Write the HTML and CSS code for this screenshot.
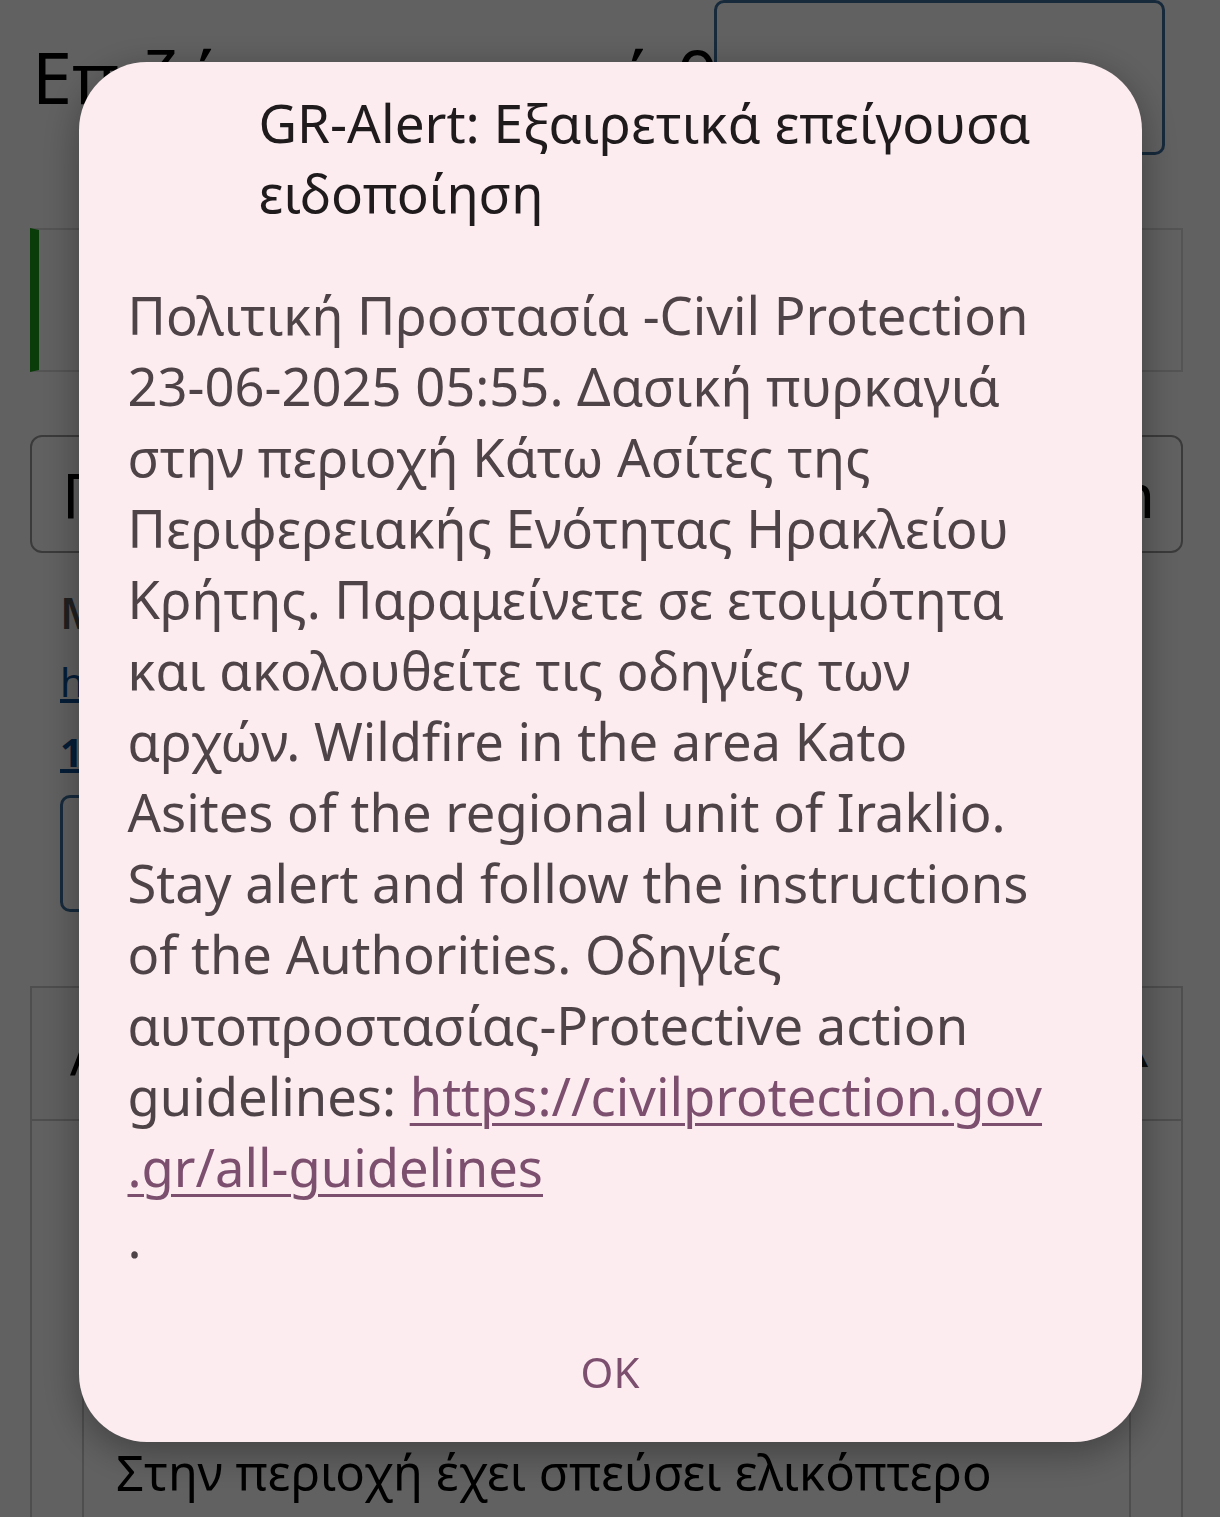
FILE: index.html
```html
<!DOCTYPE html>
<html lang="el">
<head>
    <meta charset="UTF-8">
    <meta name="viewport" content="width=device-width, initial-scale=1.0">
    <title>GR-Alert</title>
    <link rel="stylesheet" href="styles.css">
</head>
<body>
    <main class="page">
        <header class="page-head">
            <h1 class="page-title">Επιζώσα πυρκαγιά θέση</h1>
            <button class="btn-outline head-btn">Ανανέωση ειδήσεων</button>
        </header>

        <div class="notice">
            <p class="notice-text">Ενεργή πυρκαγιά</p>
        </div>

        <div class="search">
            <span class="search-left">Περιοχή</span>
            <span class="search-right">Heraklion</span>
        </div>

        <div class="info">
            <p class="info-label">Μεταβείτε στις οδηγίες</p>
            <a class="info-link" href="#">https://civilprotection.gov.gr</a>
            <a class="info-link info-strong" href="#">112</a>
            <button class="btn-outline info-btn">Κοινοποίηση</button>
        </div>

        <section class="accordion">
            <div class="acc-head">
                <span class="acc-title">Αναλυτικά</span>
                <span class="acc-caret">▲</span>
            </div>
            <div class="acc-body">
                <p class="acc-text">Στην περιοχή έχει σπεύσει ελικόπτερο</p>
            </div>
        </section>
    </main>

    <div class="scrim">
        <div class="alert" role="alertdialog">
            <h2 class="alert-title">GR-Alert: Εξαιρετικά επείγουσα<br>ειδοποίηση</h2>
            <p class="alert-text">Πολιτική Προστασία -Civil Protection<br>23-06-2025 05:55. Δασική πυρκαγιά<br>στην περιοχή Κάτω Ασίτες της<br>Περιφερειακής Ενότητας Ηρακλείου<br>Κρήτης. Παραμείνετε σε ετοιμότητα<br>και ακολουθείτε τις οδηγίες των<br>αρχών. Wildfire in the area Kato<br>Asites of the regional unit of Iraklio.<br>Stay alert and follow the instructions<br>of the Authorities. Οδηγίες<br>αυτοπροστασίας-Protective action<br>guidelines: <a class="alert-link" href="https://civilprotection.gov.gr/all-guidelines">https://civilprotection.gov<br>.gr/all-guidelines</a><br>.</p>
            <div class="alert-actions">
                <button class="alert-ok">OK</button>
            </div>
        </div>
    </div>
</body>
</html>
```

FILE: styles.css
```css
* {
    margin: 0;
    padding: 0;
    box-sizing: border-box;
}

body {
    font-family: 'Noto Sans', 'Liberation Sans', sans-serif;
    background: #fff;
    color: #000;
    height: 1517px;
    overflow: hidden;
}

.page {
    padding: 0 37px 0 30px;
}

/* page behind the alert */
.page-head {
    display: flex;
    justify-content: space-between;
    align-items: flex-start;
    height: 155px;
    margin-right: 18px;
}

.page-title {
    font-size: 72px;
    font-weight: 400;
    line-height: 1;
    margin-top: 40px;
    padding-left: 2px;
    white-space: nowrap;
    overflow: hidden;
    min-width: 0;
}

.btn-outline {
    font-family: inherit;
    background: #fff;
    border: 3px solid #3b6f9e;
    border-radius: 10px;
    color: #3b6f9e;
}

.head-btn {
    flex-shrink: 0;
    width: 451px;
    height: 155px;
    font-size: 40px;
    white-space: nowrap;
    padding-top: 38px;
}

.notice {
    margin-top: 73px;
    height: 144px;
    border: 2px solid #ddd;
    border-left: 9px solid #1a9e1a;
    display: flex;
    align-items: center;
    padding-left: 80px;
}

.notice-text {
    font-size: 44px;
}

.search {
    margin-top: 63px;
    height: 118px;
    border: 2px solid #9a9a9a;
    border-radius: 12px;
    display: flex;
    justify-content: space-between;
    align-items: center;
    padding: 0 26px 0 30px;
    font-size: 62px;
}

.info {
    padding: 24px 0 0 30px;
}

.info-label {
    font-size: 44px;
    font-weight: 600;
    color: #555;
    line-height: 70px;
}

.info-link {
    display: block;
    font-size: 40px;
    line-height: 70px;
    color: #0d4f92;
}

.info-strong {
    font-weight: 700;
}

.info-btn {
    margin-top: 8px;
    width: 420px;
    height: 117px;
    font-size: 44px;
}

.accordion {
    margin-top: 74px;
    border: 2px solid #ccc;
    height: 600px;
}

.acc-head {
    height: 133px;
    display: flex;
    justify-content: space-between;
    align-items: center;
    padding: 0 26px 0 38px;
    border-bottom: 2px solid #ccc;
    background: #fafafa;
}

.acc-title {
    font-size: 56px;
}

.acc-caret {
    font-size: 34px;
    color: #222;
}

.acc-body {
    margin: 0 50px;
    border-left: 2px solid #ccc;
    border-right: 2px solid #ccc;
    height: 470px;
    padding: 318px 0 0 32px;
}

.acc-text {
    font-size: 49px;
    white-space: nowrap;
}

/* emergency alert dialog */
.scrim {
    position: fixed;
    inset: 0;
    background: rgba(0, 0, 0, 0.62);
    display: flex;
    justify-content: center;
    align-items: flex-start;
    padding-top: 62px;
}

.alert {
    width: 1063px;
    height: 1380px;
    background: #fcecf0;
    border-radius: 68px;
    box-shadow: 0 10px 40px rgba(0, 0, 0, 0.35);
    padding: 26px 40px 0 49px;
    display: flex;
    flex-direction: column;
}

.alert-title {
    font-size: 53px;
    font-weight: 400;
    line-height: 70px;
    color: #1f1a1c;
    padding-left: 131px;
    white-space: nowrap;
}

.alert-text {
    margin-top: 51px;
    font-size: 52.5px;
    line-height: 71px;
    color: #4e4347;
    white-space: nowrap;
}

.alert-link {
    color: #7c4f6f;
    text-decoration-thickness: 3px;
    text-underline-offset: 7px;
}

.alert-actions {
    display: flex;
    justify-content: center;
    margin-top: 75px;
    margin-left: -9px;
}

.alert-ok {
    font-family: 'Noto Sans', sans-serif;
    font-size: 42px;
    line-height: 48px;
    color: #7c4f6f;
    background: none;
    border: none;
    padding: 0 20px;
}
```
